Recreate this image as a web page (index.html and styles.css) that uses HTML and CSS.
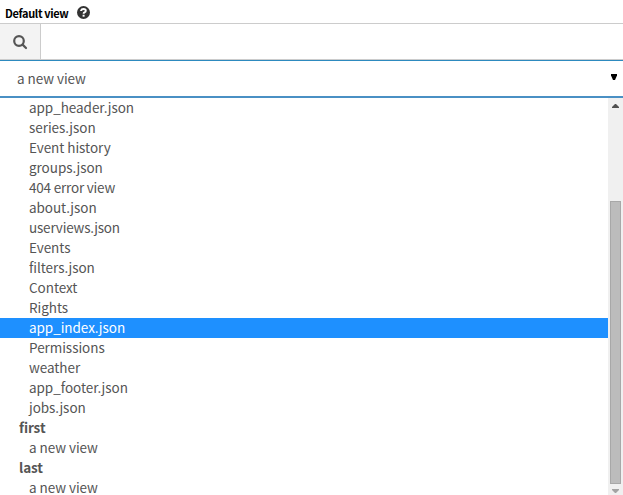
FILE: index.html
```html
<!DOCTYPE html>
<html lang="en">
<head>
<meta charset="utf-8">
<title>Default view</title>
<link rel="stylesheet" href="styles.css">
</head>
<body>
<div class="field">
  <div class="caption">
    <span class="caption-text">Default view</span>
    <svg class="help" viewBox="0 0 13 13"><circle cx="6.5" cy="6.5" r="6.5"/><path d="M4.1 5V4.6Q4.5 3 6.5 3Q8.8 3 8.8 4.8Q8.8 5.8 7.5 6.4Q6.6 6.8 6.6 7.7"/><path d="M5.6 9.7h2"/></svg>
  </div>
  <div class="search">
    <span class="search-icon"><svg viewBox="0 0 15 15"><circle cx="6" cy="6" r="4.8"/><path d="M9.6 9.6L13 13"/></svg></span>
    <div class="search-input"></div>
  </div>
  <div class="select"><span>a new view</span><svg class="caret" viewBox="0 0 6 6"><path d="M0 0H6V1.5L4 6H2L0 1.5Z"/></svg></div>
  <div class="dropdown">
    <ul class="options">
      <li>app_header.json</li>
      <li>series.json</li>
      <li>Event history</li>
      <li>groups.json</li>
      <li class="tight">404 error view</li>
      <li>about.json</li>
      <li class="tight">userviews.json</li>
      <li>Events</li>
      <li>filters.json</li>
      <li>Context</li>
      <li>Rights</li>
      <li class="active">app_index.json</li>
      <li>Permissions</li>
      <li>weather</li>
      <li>app_footer.json</li>
      <li>jobs.json</li>
      <li class="group">first</li>
      <li>a new view</li>
      <li class="group">last</li>
      <li>a new view</li>
    </ul>
    <div class="scrollbar">
      <svg class="up" viewBox="0 0 7 4"><path d="M0 4V3L3 0H4L7 3V4Z"/></svg>
      <div class="thumb"></div>
      <svg class="down" viewBox="0 0 7 4"><path d="M0 0V1L3 4H4L7 1V0Z"/></svg>
    </div>
  </div>
</div>
</body>
</html>
```
FILE: styles.css
```css
* { box-sizing: border-box; }
body {
  margin: 0;
  background: #fff;
  color: #555;
  font-family: "Noto Sans CJK SC", sans-serif;
  font-size: 13.5px;
  letter-spacing: -0.05px;
}
svg { display: block; }
.field { height: 495px; display: flex; flex-direction: column; overflow: hidden; }
.caption { height: 23px; padding: 3px 0 0 5px; display: flex; align-items: flex-start; }
.caption-text { width: 72px; color: #000; font-weight: bold; font-size: 11px; line-height: 20px; letter-spacing: -0.35px; white-space: nowrap; }
.help { width: 13px; height: 13px; margin-top: 3px; fill: #333; }
.help path { fill: none; stroke: #fff; stroke-width: 1.9; }
.search { height: 37px; display: flex; border-top: 1px solid #ccc; border-bottom: 1px solid #ccc; }
.search-icon { width: 41px; padding: 11px 0 0 13px; background: #f3f3f3; border-right: 1px solid #ccc; }
.search-icon svg { width: 15px; height: 15px; fill: none; stroke: #555; stroke-width: 2.2; stroke-linecap: round; }
.select {
  height: 38px;
  padding: 0 6px 2px 17px;
  display: flex;
  align-items: center;
  justify-content: space-between;
  border-top: 1px solid #2d8abf;
  border-bottom: 2px solid #4a90c4;
}
.caret { width: 6px; height: 6px; fill: #000; margin-top: -1px; }
.dropdown { flex: 1; min-height: 0; display: flex; }
.options { flex: 1; margin: 0; padding: 0; list-style: none; }
.options li { height: 20px; line-height: 18px; padding-left: 29px; white-space: nowrap; }
.options .tight { letter-spacing: -0.2px; }
.options .active { background: #1e90ff; color: #fff; }
.options .group { padding-left: 19px; font-weight: bold; letter-spacing: -0.1px; }
.scrollbar { width: 15px; background: #f0f0f0; display: flex; flex-direction: column; align-items: center; padding: 6px 0 2px; }
.up, .down { width: 7px; height: 4px; }
.up { fill: #505050; }
.down { fill: #a3a3a3; margin-top: 5px; }
.thumb { width: 11px; height: 283px; margin-top: 93px; background: #bcbcbc; border: 1px solid #a8a8a8; }
```
